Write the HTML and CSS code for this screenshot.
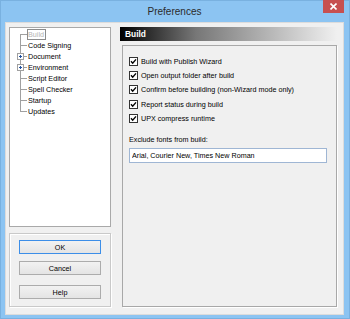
FILE: index.html
```html
<!DOCTYPE html>
<html lang="en">
<head>
    <meta charset="UTF-8">
    <meta name="viewport" content="width=device-width, initial-scale=1.0">
    <title>Preferences</title>
    <link rel="stylesheet" href="styles.css">
</head>
<body>
    <div class="window">
        <div class="titlebar">
            <span class="title">Preferences</span>
            <div class="close">
                <svg width="7" height="7" viewBox="0 0 7 7"><path d="M0.5 0.5 L6.5 6.5 M6.5 0.5 L0.5 6.5" stroke="#fff" stroke-width="1.6"/></svg>
            </div>
        </div>

        <div class="client">
            <div class="sidebar">
                <div class="tree">
                    <div class="node first"><span class="gutter"></span><span class="label selected">Build</span></div>
                    <div class="node"><span class="gutter"></span><span class="label">Code Signing</span></div>
                    <div class="node"><span class="gutter"><svg class="plus" width="7" height="7" viewBox="0 0 7 7"><rect x="0.5" y="0.5" width="6" height="6" fill="#fff" stroke="#a0a0a0"/><path d="M2 3.5 H5 M3.5 2 V5" stroke="#2050a0"/></svg></span><span class="label">Document</span></div>
                    <div class="node"><span class="gutter"><svg class="plus" width="7" height="7" viewBox="0 0 7 7"><rect x="0.5" y="0.5" width="6" height="6" fill="#fff" stroke="#a0a0a0"/><path d="M2 3.5 H5 M3.5 2 V5" stroke="#2050a0"/></svg></span><span class="label">Environment</span></div>
                    <div class="node"><span class="gutter"></span><span class="label">Script Editor</span></div>
                    <div class="node"><span class="gutter"></span><span class="label">Spell Checker</span></div>
                    <div class="node"><span class="gutter"></span><span class="label">Startup</span></div>
                    <div class="node last"><span class="gutter"></span><span class="label">Updates</span></div>
                </div>

                <div class="buttons">
                    <button type="button" class="btn default">OK</button>
                    <button type="button" class="btn">Cancel</button>
                    <button type="button" class="btn help">Help</button>
                </div>
            </div>

            <div class="main">
                <div class="header">Build</div>
                <div class="group">
                    <label class="option"><svg width="9" height="9" viewBox="0 0 9 9"><rect x="0.5" y="0.5" width="8" height="8" fill="#fff" stroke="#333"/><path d="M2 4.3 L3.7 6.2 L7 2.4" fill="none" stroke="#000" stroke-width="1.4"/></svg>Build with Publish Wizard</label>
                    <label class="option"><svg width="9" height="9" viewBox="0 0 9 9"><rect x="0.5" y="0.5" width="8" height="8" fill="#fff" stroke="#333"/><path d="M2 4.3 L3.7 6.2 L7 2.4" fill="none" stroke="#000" stroke-width="1.4"/></svg>Open output folder after build</label>
                    <label class="option"><svg width="9" height="9" viewBox="0 0 9 9"><rect x="0.5" y="0.5" width="8" height="8" fill="#fff" stroke="#333"/><path d="M2 4.3 L3.7 6.2 L7 2.4" fill="none" stroke="#000" stroke-width="1.4"/></svg>Confirm before building (non-Wizard mode only)</label>
                    <label class="option"><svg width="9" height="9" viewBox="0 0 9 9"><rect x="0.5" y="0.5" width="8" height="8" fill="#fff" stroke="#333"/><path d="M2 4.3 L3.7 6.2 L7 2.4" fill="none" stroke="#000" stroke-width="1.4"/></svg>Report status during build</label>
                    <label class="option"><svg width="9" height="9" viewBox="0 0 9 9"><rect x="0.5" y="0.5" width="8" height="8" fill="#fff" stroke="#333"/><path d="M2 4.3 L3.7 6.2 L7 2.4" fill="none" stroke="#000" stroke-width="1.4"/></svg>UPX compress runtime</label>

                    <div class="field-label">Exclude fonts from build:</div>
                    <input type="text" class="field" value="Arial, Courier New, Times New Roman">
                </div>
            </div>
        </div>
    </div>
</body>
</html>
```

FILE: styles.css
```css
body {
    margin: 0;
    font-family: "Liberation Sans", Arial, sans-serif;
    font-size: 7.2px;
    color: #000;
}

.window {
    width: 350px;
    height: 319px;
    box-sizing: border-box;
    background-color: #8cc4f2;
    border: 1px solid #79b1e0;
    padding: 0 5px 4px 4px;
    display: flex;
    flex-direction: column;
}

/* Barra de titulo */
.titlebar {
    height: 21px;
    display: grid;
    grid-template-columns: 1fr auto 1fr;
    align-items: start;
}

.title {
    grid-column: 2;
    font-size: 10px;
    color: #2b2b2b;
    line-height: 21px;
}

.close {
    grid-column: 3;
    justify-self: end;
    width: 21px;
    height: 13px;
    margin-top: -1px;
    background-color: #c75050;
    display: flex;
    align-items: center;
    justify-content: center;
}

.client {
    flex: 1;
    background-color: #f0f0f0;
    border: 1px solid #dcdcdc;
    padding: 4px 6px 7px 3px;
    display: flex;
    gap: 9px;
}

/* Coluna da esquerda */
.sidebar {
    width: 102px;
    display: flex;
    flex-direction: column;
    gap: 6px;
}

.tree {
    height: 200px;
    box-sizing: border-box;
    background-color: #fff;
    border: 1px solid #a9a9a9;
    padding-top: 1px;
}

.node {
    height: 11px;
    display: flex;
    align-items: center;
}

.gutter {
    width: 18px;
    height: 11px;
    flex-shrink: 0;
    display: flex;
    align-items: center;
    background:
        linear-gradient(#a0a0a0, #a0a0a0) 10px 0 / 1px 100% no-repeat,
        linear-gradient(#a0a0a0, #a0a0a0) 10px 5px / 7px 1px no-repeat;
}

.node.first .gutter {
    background:
        linear-gradient(#a0a0a0, #a0a0a0) 10px 5px / 1px 6px no-repeat,
        linear-gradient(#a0a0a0, #a0a0a0) 10px 5px / 7px 1px no-repeat;
}

.node.last .gutter {
    background:
        linear-gradient(#a0a0a0, #a0a0a0) 10px 0 / 1px 6px no-repeat,
        linear-gradient(#a0a0a0, #a0a0a0) 10px 5px / 7px 1px no-repeat;
}

.plus {
    margin-left: 7px;
    margin-top: -1px;
}

.label {
    white-space: nowrap;
    padding: 0 1px 0 0;
    line-height: 9px;
    border: 1px solid transparent;
    margin-left: -1px;
}

.label.selected {
    color: #b4b4b4;
    border-color: #8c8c8c;
}

.buttons {
    flex: 1;
    border: 1px solid #c9c9c9;
    box-shadow: inset 1px 1px 0 #fff, 1px 1px 0 #fff;
    display: flex;
    flex-direction: column;
    align-items: center;
    padding-top: 6px;
}

.btn {
    width: 82px;
    height: 14px;
    margin: 0 0 7px 0;
    padding: 0;
    font-family: inherit;
    font-size: 7.2px;
    color: #000;
    border: 1px solid #acacac;
    background: linear-gradient(#f2f2f2, #e4e4e4);
}

.btn.default {
    border-color: #3c8ee8;
}

.btn.help {
    margin-top: 3px;
}

/* Coluna da direita */
.main {
    flex: 1;
    display: flex;
    flex-direction: column;
    gap: 4px;
}

.header {
    height: 14px;
    line-height: 14px;
    padding-left: 5px;
    font-size: 8.4px;
    font-weight: bold;
    color: #fff;
    background: linear-gradient(to right, #000 0%, #777 35%, #f0f0f0 100%);
}

.group {
    flex: 1;
    margin-left: 2px;
    border: 1px solid #a8a8a8;
    box-shadow: 1px 1px 0 #fff;
    padding: 8px 6px 0 6px;
    display: flex;
    flex-direction: column;
}

.option {
    height: 14.3px;
    display: flex;
    align-items: center;
    gap: 3px;
    white-space: nowrap;
}

.field-label {
    margin-top: 10px;
    height: 10px;
    line-height: 10px;
}

.field {
    margin-top: 3px;
    width: 198px;
    height: 15px;
    box-sizing: border-box;
    border: 1px solid #9fb6d4;
    padding: 0 2px;
    font-family: inherit;
    font-size: 7.2px;
    color: #000;
    background-color: #fff;
}
```
